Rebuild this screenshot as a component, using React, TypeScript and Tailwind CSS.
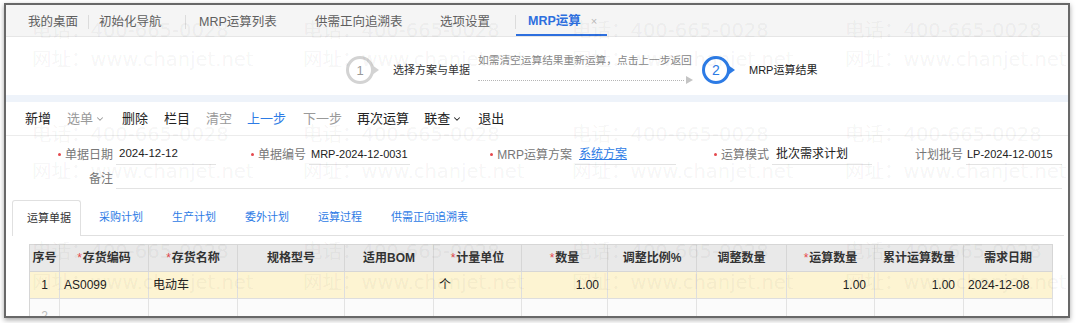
import React from "react";
import { ChevronDown } from "lucide-react";

const font = "font-['Liberation_Sans','Noto_Sans_CJK_SC',sans-serif]";

function Dot() {
  return <span className="inline-block w-[3px] h-[3px] rounded-full bg-[#e5484d] mr-[4px]" />;
}

function Star() {
  return <span className="text-[#e5484d] font-normal mr-[1px]">*</span>;
}

function StepIcon({ n, active }: { n: string; active?: boolean }) {
  const c = active ? "#2d7be5" : "#d3d3d3";
  return (
    <svg width="40" height="32" viewBox="0 0 40 32">
      <polygon points="27,11 34,16 27,21" fill={c} />
      <circle cx="15" cy="16" r="12.5" fill="white" stroke={c} strokeWidth="3" />
      <text
        x="15"
        y="20.5"
        textAnchor="middle"
        fontSize={active ? "14" : "13"}
        fontFamily="Liberation Sans, sans-serif"
        fill={active ? "#2d7be5" : "#9a9a9a"}
      >
        {n}
      </text>
    </svg>
  );
}

const wmRows = [
  { y: 31, t: "电话：400-665-0028" },
  { y: 60, t: "网址：www.chanjet.net" },
  { y: 135, t: "电话：400-665-0028" },
  { y: 172, t: "网址：www.chanjet.net" },
  { y: 252, t: "电话：400-665-0028" },
  { y: 283, t: "网址：www.chanjet.net" },
];
const wmX = [32, 303, 572, 845];

function Watermark() {
  return (
    <div className="absolute inset-0 pointer-events-none overflow-hidden font-['DejaVu_Sans','Noto_Sans_CJK_SC',sans-serif] text-[19.5px] leading-[28px] text-black/[0.055] whitespace-nowrap">
      {wmRows.map((r, i) =>
        wmX.map((x, j) => (
          <div key={i + "-" + j} className="absolute" style={{ top: r.y - 14, left: x }}>
            {r.t}
          </div>
        ))
      )}
    </div>
  );
}

const cols = "grid grid-cols-[30px_89px_89px_107px_89px_88px_86px_89px_90px_88px_89px_89px]";

export default function App() {
  const hc = "h-[27px] flex items-center justify-center border-r border-b border-[#d6d6d6] bg-[#e9e9e9] font-bold text-[12px] text-[#333]";
  const rc = "h-[27px] flex items-center border-r border-b border-[#dedede] bg-[#fdf4d2] text-[12px] text-[#222]";
  const ec = "h-[27px] flex items-start pt-[8px] border-r border-[#e3e3e3] bg-[#fbfbfb] text-[12px] text-[#bbb]";
  return (
    <div className={`relative w-[1078px] h-[323px] bg-white overflow-hidden ${font}`}>
      <div className="ml-[4px] mt-[3px] w-[1066px] h-[315px] border-2 border-[#686868] shadow-[0_2px_5px_rgba(0,0,0,0.35)] overflow-hidden flex flex-col bg-white">
        {/* top tab bar */}
        <div className="h-[32px] shrink-0 bg-[#f5f5f5] border-b border-[#e6e6e6] flex items-stretch pl-[22px] text-[12.5px] text-[#5f5f5f]">
          <div className="w-[60px] flex items-center pt-[3px]">我的桌面</div>
          <div className="w-px h-[14px] self-center mt-[3px] bg-[#dcdcdc]" />
          <div className="ml-[10px] w-[86px] flex items-center pt-[3px]">初始化导航</div>
          <div className="w-px h-[14px] self-center mt-[3px] bg-[#dcdcdc]" />
          <div className="ml-[13px] w-[116px] flex items-center pt-[3px]">MRP运算列表</div>
          <div className="w-[125px] flex items-center pt-[3px]">供需正向追溯表</div>
          <div className="w-[75px] flex items-center pt-[3px]">选项设置</div>
          <div className="w-px h-[14px] self-center mt-[3px] bg-[#dcdcdc]" />
          <div className="w-[91px] pl-[12px] flex items-center pt-[3px] border-b-2 border-[#2d6fde]">
            <span className="font-bold text-[#2d6fde]">MRP运算</span>
            <span className="ml-[10px] text-[11px] text-[#bbb]">×</span>
          </div>
        </div>

        {/* steps */}
        <div className="h-[58px] shrink-0 flex items-start pt-[17px] pl-[339px]">
          <StepIcon n="1" />
          <div className="ml-[8px] h-[32px] flex items-center text-[11px] text-[#333]">选择方案与单据</div>
          <div className="ml-[8px] w-[215px] flex flex-col -mt-[1px]">
            <div className="h-[14px] leading-[14px] text-[10.7px] text-[#888] whitespace-nowrap">如需清空运算结果重新运算，点击上一步返回</div>
            <div className="mt-[9px] flex items-center">
              <div className="w-[206px] border-b border-dotted border-[#b5b5b5]" />
              <svg width="7" height="8" viewBox="0 0 7 8" className="ml-[2px]">
                <polygon points="0,0 7,4 0,8" fill="#c4c4c4" />
              </svg>
            </div>
          </div>
          <div className="ml-[8px]">
            <StepIcon n="2" active />
          </div>
          <div className="ml-[8px] h-[32px] flex items-center text-[11px] text-[#222]">MRP运算结果</div>
        </div>

        {/* blue strip */}
        <div className="h-[7px] shrink-0 bg-[#eef3fa]" />

        {/* toolbar */}
        <div className="h-[34px] shrink-0 border-b border-[#ececec] flex items-center pl-[19px] text-[13px] text-[#222]">
          <span>新增</span>
          <span className="ml-[16px] flex items-center text-[#9a9a9a]">
            选单
            <ChevronDown size={10} strokeWidth={2.5} className="ml-[2px]" />
          </span>
          <span className="ml-[17px]">删除</span>
          <span className="ml-[16px]">栏目</span>
          <span className="ml-[16px] text-[#9a9a9a]">清空</span>
          <span className="ml-[15px] text-[#2d7be5]">上一步</span>
          <span className="ml-[17px] text-[#9a9a9a]">下一步</span>
          <span className="ml-[15px]">再次运算</span>
          <span className="ml-[15px] flex items-center">
            联查
            <ChevronDown size={10} strokeWidth={2.5} className="ml-[2px]" />
          </span>
          <span className="ml-[16px]">退出</span>
        </div>

        {/* form */}
        <div className="h-[64px] shrink-0 flex flex-col text-[12px] whitespace-nowrap">
          <div className="mt-[8px] h-[21px] flex items-stretch">
            <div className="w-[107px] flex items-center justify-end text-[#777]"><Dot />单据日期</div>
            <div className="ml-[3px] w-[100px] border-b border-[#e3e3e3] flex items-center pl-[3px] text-[#222] text-[11.5px]">2024-12-12</div>
            <div className="w-[90px] flex items-center justify-end text-[#777]"><Dot />单据编号</div>
            <div className="ml-[3px] w-[101px] border-b border-[#e3e3e3] flex items-center pl-[2px] text-[#222] text-[11px]">MRP-2024-12-0031</div>
            <div className="w-[162px] flex items-center justify-end text-[#777]"><Dot />MRP运算方案</div>
            <div className="ml-[3px] w-[101px] border-b border-[#e3e3e3] flex items-center pl-[4px] text-[#2d7be5] underline">系统方案</div>
            <div className="w-[93px] flex items-center justify-end text-[#777]"><Dot />运算模式</div>
            <div className="ml-[3px] w-[100px] border-b border-[#e3e3e3] flex items-center pl-[4px] text-[#222]">批次需求计划</div>
            <div className="w-[91px] flex items-center justify-end text-[#777]">计划批号</div>
            <div className="ml-[3px] w-[96px] border-b border-[#e3e3e3] flex items-center pl-[1px] text-[#222] text-[11px]">LP-2024-12-0015</div>
          </div>
          <div className="mt-[4px] h-[20px] flex items-stretch">
            <div className="w-[107px] flex items-center justify-end text-[#777]">备注</div>
            <div className="ml-[3px] w-[946px] border-b border-[#e3e3e3]" />
          </div>
        </div>

        {/* tabs */}
        <div className="ml-[6px] mr-[4px] h-[36px] shrink-0 flex items-end border-b border-[#e0e0e0] text-[11px]">
          <div className="w-[69px] h-[36px] pl-[14px] flex items-center border border-b-0 border-[#e0e0e0] rounded-t-[3px] bg-white text-[#333] -mb-px pb-px">运算单据</div>
          <div className="ml-[4px] w-[73px] h-[35px] pl-[14px] flex items-center text-[#2d7be5]">采购计划</div>
          <div className="w-[73px] h-[35px] pl-[14px] flex items-center text-[#2d7be5]">生产计划</div>
          <div className="w-[73px] h-[35px] pl-[14px] flex items-center text-[#2d7be5]">委外计划</div>
          <div className="w-[73px] h-[35px] pl-[14px] flex items-center text-[#2d7be5]">运算过程</div>
          <div className="w-[100px] h-[35px] pl-[14px] flex items-center text-[#2d7be5]">供需正向追溯表</div>
        </div>

        {/* table */}
        <div className={`mt-[8px] ml-[23px] w-[1024px] border-l border-t border-[#d6d6d6] ${cols}`}>
          <div className={hc}>序号</div>
          <div className={hc}><Star />存货编码</div>
          <div className={hc}><Star />存货名称</div>
          <div className={hc}>规格型号</div>
          <div className={hc}>适用BOM</div>
          <div className={hc}><Star />计量单位</div>
          <div className={hc}><Star />数量</div>
          <div className={hc}>调整比例%</div>
          <div className={hc}>调整数量</div>
          <div className={hc}><Star />运算数量</div>
          <div className={hc}>累计运算数量</div>
          <div className={hc}>需求日期</div>

          <div className={`${rc} justify-center`}>1</div>
          <div className={`${rc} pl-[4px]`}>AS0099</div>
          <div className={`${rc} pl-[4px]`}>电动车</div>
          <div className={rc} />
          <div className={rc} />
          <div className={`${rc} pl-[5px]`}>个</div>
          <div className={`${rc} justify-end pr-[8px]`}>1.00</div>
          <div className={rc} />
          <div className={rc} />
          <div className={`${rc} justify-end pr-[8px]`}>1.00</div>
          <div className={`${rc} justify-end pr-[8px]`}>1.00</div>
          <div className={`${rc} pl-[4px]`}>2024-12-08</div>

          <div className={`${ec} justify-center`}>2</div>
          <div className={ec} />
          <div className={ec} />
          <div className={ec} />
          <div className={ec} />
          <div className={ec} />
          <div className={ec} />
          <div className={ec} />
          <div className={ec} />
          <div className={ec} />
          <div className={ec} />
          <div className={ec} />
        </div>
      </div>
      <Watermark />
    </div>
  );
}
